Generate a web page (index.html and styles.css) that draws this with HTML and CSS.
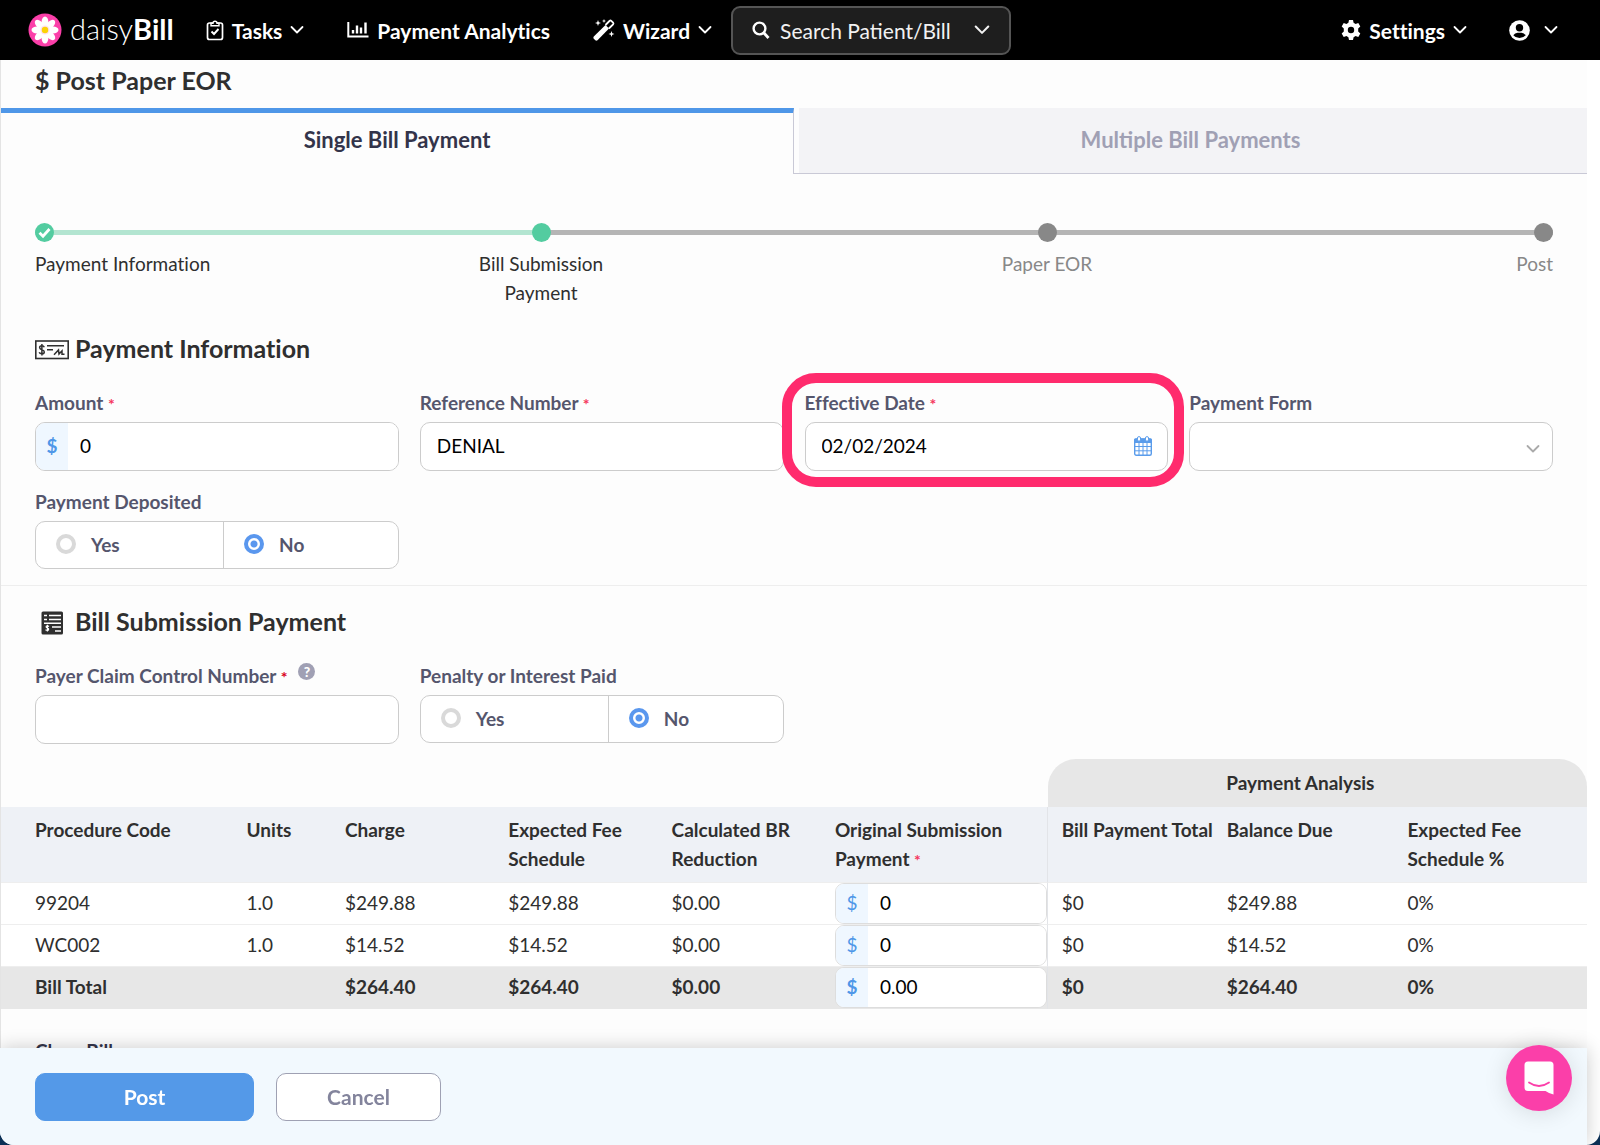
FILE: index.html
```html
<!DOCTYPE html>
<html lang="en">
<head>
    <meta charset="UTF-8">
    <meta name="viewport" content="width=device-width, initial-scale=1.0">
    <link rel="stylesheet" href="styles.css">
    <title>Post Paper EOR - daisyBill</title>
</head>
<body>
    <svg class="sprite" aria-hidden="true">
        <symbol id="chevron" viewBox="0 0 14 14">
            <path d="M1.5 4 L7 9.500 L12.500 4" fill="none" stroke="currentColor" stroke-width="1.8" stroke-linecap="round" stroke-linejoin="round"/>
        </symbol>
    </svg>

    <header class="navbar">
        <a href="#" class="brand">
            <svg width="34" height="34" viewBox="0 0 34 34" aria-hidden="true">
                <circle cx="17" cy="17" r="16.500" fill="#fb3fa9"/>
                <g fill="#fff">
                    <ellipse cx="17" cy="9" rx="3.400" ry="5.500"/>
                    <ellipse cx="17" cy="9" rx="3.400" ry="5.500" transform="rotate(45 17 17)"/>
                    <ellipse cx="17" cy="9" rx="3.400" ry="5.500" transform="rotate(90 17 17)"/>
                    <ellipse cx="17" cy="9" rx="3.400" ry="5.500" transform="rotate(135 17 17)"/>
                    <ellipse cx="17" cy="9" rx="3.400" ry="5.500" transform="rotate(180 17 17)"/>
                    <ellipse cx="17" cy="9" rx="3.400" ry="5.500" transform="rotate(225 17 17)"/>
                    <ellipse cx="17" cy="9" rx="3.400" ry="5.500" transform="rotate(270 17 17)"/>
                    <ellipse cx="17" cy="9" rx="3.400" ry="5.500" transform="rotate(315 17 17)"/>
                    <circle cx="17" cy="17" r="6"/>
                </g>
                <circle cx="17" cy="17" r="4.500" fill="#ffe1ef"/>
                <circle cx="17" cy="17" r="3.200" fill="#fcd307"/>
            </svg>
            <span class="brand-name">daisy<b>Bill</b></span>
        </a>

        <nav class="nav-links">
            <a href="#" class="nav-link">
                <svg width="18" height="22" viewBox="0 0 18 22" fill="none" stroke="#fff" stroke-width="1.700" aria-hidden="true">
                    <rect x="1.500" y="4" width="15" height="16.500" rx="2"/>
                    <path d="M5 6.800 V4.200 H7 A2 2 0 0 1 11 4.200 H13 V6.800 Z" fill="#000" stroke-width="1.400"/>
                    <path d="M5.500 12.500 L8 15 L12.500 10" stroke-width="1.900"/>
                </svg>
                Tasks
                <svg class="chevron" width="14" height="14"><use href="#chevron"/></svg>
            </a>
            <a href="#" class="nav-link">
                <svg width="22" height="18" viewBox="0 0 22 18" fill="none" stroke="#fff" aria-hidden="true">
                    <path d="M1.300 1 V15.500 H21.500" stroke-width="2"/>
                    <path d="M6 12.500 V9 M10 12.500 V4.500 M14 12.500 V6.500 M18.500 12.500 V1.500" stroke-width="2.400"/>
                </svg>
                Payment Analytics
            </a>
            <a href="#" class="nav-link">
                <svg width="22" height="22" viewBox="0 0 22 22" fill="#fff" aria-hidden="true">
                    <path d="M0.800 17.600 L12.500 6 L16 9.500 L4.500 21.300 Q3.300 22.200 2.300 21.300 L0.800 19.800 Q0 18.800 0.800 17.600 Z"/>
                    <path d="M12.500 6 L16.700 1.800 Q17.500 1.200 18.300 1.900 L20.100 3.700 Q20.800 4.500 20.100 5.300 L15.900 9.500" fill="none" stroke="#fff" stroke-width="1.800"/>
                    <path d="M5 1 L5.800 3.200 L8 4 L5.800 4.800 L5 7 L4.200 4.800 L2 4 L4.200 3.200 Z M11 0 L11.600 1.400 L13 2 L11.600 2.600 L11 4 L10.400 2.600 L9 2 L10.400 1.400 Z M18.500 12 L19.300 14.200 L21.500 15 L19.300 15.800 L18.500 18 L17.700 15.800 L15.500 15 L17.700 14.200 Z"/>
                </svg>
                Wizard
                <svg class="chevron" width="14" height="14"><use href="#chevron"/></svg>
            </a>
        </nav>

        <button type="button" class="search">
            <svg width="18" height="18" viewBox="0 0 18 18" fill="none" stroke="#fff" aria-hidden="true">
                <circle cx="7.500" cy="7.500" r="5.900" stroke-width="2.400"/>
                <path d="M12 12 L16.500 17" stroke-width="2.800"/>
            </svg>
            <span class="search-text">Search Patient/Bill</span>
            <svg width="16" height="16"><use href="#chevron"/></svg>
        </button>

        <nav class="nav-account">
            <a href="#" class="nav-link">
                <svg width="20" height="20" viewBox="0 0 20 20" aria-hidden="true">
                    <path fill="#fff" fill-rule="evenodd" d="M8 0 H12 L12.600 2.700 L14.600 3.900 L17.300 3 L19.300 6.500 L17.200 8.400 V11.600 L19.300 13.500 L17.300 17 L14.600 16.100 L12.600 17.300 L12 20 H8 L7.400 17.300 L5.400 16.100 L2.700 17 L0.700 13.500 L2.800 11.600 V8.400 L0.700 6.500 L2.700 3 L5.400 3.900 L7.400 2.700 Z M10 6.800 A3.200 3.200 0 1 0 10 13.200 A3.200 3.200 0 1 0 10 6.800 Z"/>
                </svg>
                Settings
                <svg class="chevron" width="14" height="14"><use href="#chevron"/></svg>
            </a>
            <a href="#" class="nav-link nav-user" aria-label="Account">
                <svg width="21" height="21" viewBox="0 0 21 21" aria-hidden="true">
                    <circle cx="10.500" cy="10.500" r="10.300" fill="#fff"/>
                    <circle cx="10.500" cy="7.800" r="3.700" fill="#000"/>
                    <path d="M4.300 15.300 Q6 12.700 8.500 12.700 H12.500 Q15 12.700 16.700 15.300 Q14.500 18 10.500 18 Q6.500 18 4.300 15.300 Z" fill="#000"/>
                </svg>
                <svg class="chevron" width="14" height="14"><use href="#chevron"/></svg>
            </a>
        </nav>
    </header>

    <main class="content">
        <h1 class="page-title">$ Post Paper EOR</h1>

        <div class="tabs" role="tablist">
            <button type="button" class="tab tab-active" role="tab" aria-selected="true">Single Bill Payment</button>
            <button type="button" class="tab" role="tab" aria-selected="false">Multiple Bill Payments</button>
        </div>

        <ol class="stepper">
            <li class="step step-done">
                <span class="dot">
                    <svg width="19" height="19" viewBox="0 0 19 19" aria-hidden="true"><path d="M4.500 9.800 L8 13.200 L14.500 6" fill="none" stroke="#fff" stroke-width="2.800"/></svg>
                </span>
                <span class="step-label">Payment Information</span>
            </li>
            <li class="step step-current">
                <span class="dot"></span>
                <span class="step-label">Bill Submission Payment</span>
            </li>
            <li class="step">
                <span class="dot"></span>
                <span class="step-label">Paper EOR</span>
            </li>
            <li class="step">
                <span class="dot"></span>
                <span class="step-label">Post</span>
            </li>
        </ol>

        <section class="panel">
            <h2 class="panel-title">
                <svg class="title-icon" width="34" height="20" viewBox="0 0 34 20" fill="none" stroke="#2f2f2f" stroke-width="1.600" aria-hidden="true">
                    <rect x="0.800" y="1" width="32.400" height="17.500"/>
                    <path d="M9.300 7.300 Q8.700 5.800 6.800 5.800 Q4.600 5.800 4.600 7.600 Q4.600 9.200 6.900 9.700 Q9.300 10.300 9.300 12 Q9.300 13.800 6.900 13.800 Q4.700 13.800 4.200 12.200 M6.900 4 V15.500" stroke-width="1.500"/>
                    <path d="M12 5.800 H29 M12 9.800 H18 M19 14.800 L23.500 10 L24 14 L27 10.800 V14.300 H29.500" stroke-width="1.500"/>
                </svg>
                Payment Information
            </h2>
            <div class="fields">
                <div class="field">
                    <label for="amount">Amount <i class="req">*</i></label>
                    <div class="money">
                        <span class="prefix">$</span>
                        <input type="text" id="amount" value="0">
                    </div>
                </div>
                <div class="field">
                    <label for="reference">Reference Number <i class="req">*</i></label>
                    <input type="text" class="box" id="reference" value="DENIAL">
                </div>
                <div class="field field-marked">
                    <label for="effectiveDate">Effective Date <i class="req">*</i></label>
                    <div class="with-icon">
                        <input type="text" class="box" id="effectiveDate" value="02/02/2024">
                        <svg class="field-icon" width="18" height="20" viewBox="0 0 18 20" aria-hidden="true">
                            <rect x="0.700" y="3" width="16.600" height="16.300" rx="1.500" fill="#fff" stroke="#5a9ceb" stroke-width="1.400"/>
                            <path d="M0.700 3 H17.300 V6.500 H0.700 Z" fill="#5a9ceb" stroke="#5a9ceb"/>
                            <path d="M1 10.500 H17 M1 14.800 H17 M5 7 V19 M9 7 V19 M13 7 V19" stroke="#5a9ceb" stroke-width="1"/>
                            <rect x="3.500" y="0.600" width="3" height="4.600" rx="1.400" fill="#fff" stroke="#5a9ceb"/>
                            <rect x="11.500" y="0.600" width="3" height="4.600" rx="1.400" fill="#fff" stroke="#5a9ceb"/>
                        </svg>
                    </div>
                </div>
                <div class="field">
                    <label for="paymentForm">Payment Form</label>
                    <div class="with-icon">
                        <select class="box" id="paymentForm">
                            <option value=""></option>
                            <option value="check">Check</option>
                            <option value="eft">EFT</option>
                        </select>
                        <svg class="field-icon select-arrow" width="14" height="14"><use href="#chevron"/></svg>
                    </div>
                </div>
                <fieldset class="field">
                    <legend>Payment Deposited</legend>
                    <div class="radios">
                        <label><input type="radio" name="deposited"> Yes</label>
                        <label><input type="radio" name="deposited" checked> No</label>
                    </div>
                </fieldset>
            </div>
        </section>

        <section class="panel panel-bill">
            <h2 class="panel-title">
                <svg class="title-icon" width="34" height="24" viewBox="0 0 34 24" aria-hidden="true">
                    <rect x="6.500" y="0.500" width="21.500" height="23" rx="1.500" fill="#2f2f2f"/>
                    <path d="M9 4.500 H12 M14 4.500 H26 M9 8.500 H12 M14 8.500 H26 M9 12.200 H26 M17 16 H26 M20 20 H26" stroke="#fff" stroke-width="1.500"/>
                    <path d="M14 15.500 Q12.500 14.300 11.300 15.200 Q10.600 16.400 12.400 17 Q14.200 17.700 13.400 19 Q12.200 20 10.500 18.800 M12.400 13.700 V20.500" fill="none" stroke="#fff" stroke-width="1.200"/>
                </svg>
                Bill Submission Payment
            </h2>
            <div class="fields">
                <div class="field">
                    <div class="label-row">
                        <label for="claimNumber">Payer Claim Control Number <i class="req req-dark">*</i></label>
                        <button type="button" class="help" aria-label="Help">?</button>
                    </div>
                    <input type="text" class="box" id="claimNumber">
                </div>
                <fieldset class="field">
                    <legend>Penalty or Interest Paid</legend>
                    <div class="radios">
                        <label><input type="radio" name="penalty"> Yes</label>
                        <label><input type="radio" name="penalty" checked> No</label>
                    </div>
                </fieldset>
            </div>
        </section>

        <table class="bill-table">
            <colgroup>
                <col class="col-code">
                <col class="col-units">
                <col class="col-money">
                <col class="col-money">
                <col class="col-money">
                <col class="col-input">
                <col class="col-total">
                <col class="col-balance">
                <col>
            </colgroup>
            <thead>
                <tr class="group-row">
                    <td colspan="6"></td>
                    <th colspan="3" class="group">Payment Analysis</th>
                </tr>
                <tr class="head-row">
                    <th>Procedure Code</th>
                    <th>Units</th>
                    <th>Charge</th>
                    <th>Expected Fee Schedule</th>
                    <th>Calculated BR Reduction</th>
                    <th class="split">Original Submission Payment <i class="req">*</i></th>
                    <th>Bill Payment Total</th>
                    <th>Balance Due</th>
                    <th>Expected Fee Schedule %</th>
                </tr>
            </thead>
            <tbody>
                <tr>
                    <td>99204</td>
                    <td>1.0</td>
                    <td>$249.88</td>
                    <td>$249.88</td>
                    <td>$0.00</td>
                    <td class="split">
                        <div class="money"><span class="prefix">$</span><input type="text" value="0" aria-label="Payment for 99204"></div>
                    </td>
                    <td>$0</td>
                    <td>$249.88</td>
                    <td>0%</td>
                </tr>
                <tr>
                    <td>WC002</td>
                    <td>1.0</td>
                    <td>$14.52</td>
                    <td>$14.52</td>
                    <td>$0.00</td>
                    <td class="split">
                        <div class="money"><span class="prefix">$</span><input type="text" value="0" aria-label="Payment for WC002"></div>
                    </td>
                    <td>$0</td>
                    <td>$14.52</td>
                    <td>0%</td>
                </tr>
            </tbody>
            <tfoot>
                <tr>
                    <td>Bill Total</td>
                    <td></td>
                    <td>$264.40</td>
                    <td>$264.40</td>
                    <td>$0.00</td>
                    <td class="split">
                        <div class="money"><span class="prefix">$</span><input type="text" value="0.00" aria-label="Bill total payment"></div>
                    </td>
                    <td>$0</td>
                    <td>$264.40</td>
                    <td>0%</td>
                </tr>
            </tfoot>
        </table>

        <div class="close-bill">Close Bill</div>
    </main>

    <footer class="actions">
        <button type="submit" class="btn btn-post">Post</button>
        <button type="button" class="btn btn-cancel">Cancel</button>
    </footer>

    <button type="button" class="chat" aria-label="Open chat">
        <svg width="30" height="34" viewBox="0 0 30 34" aria-hidden="true">
            <path d="M4 0.500 H26 Q29.500 0.500 29.500 4 V33.500 Q25 32.500 21.500 30 H4 Q0.500 30 0.500 26.500 V4 Q0.500 0.500 4 0.500 Z" fill="#fff"/>
            <path d="M5 21.500 Q15 28.500 25 21.500" fill="none" stroke="#fb3fa9" stroke-width="1.800" stroke-linecap="round"/>
        </svg>
    </button>
</body>
</html>
```

FILE: styles.css
```css
* {
    box-sizing: border-box;
}

html {
    background-color: #0b2f55;
}

body {
    margin: 0;
    height: 100vh;
    display: flex;
    flex-direction: column;
    overflow: hidden;
    border-radius: 0 0 14px 14px;
    background-color: #fff;
    color: #2f2f2f;
    font-family: Lato, "Open Sans", sans-serif;
    font-size: 19px;
    font-variant-ligatures: none;
    line-height: 29px;
}

button, input, select {
    font-family: inherit;
    font-size: inherit;
    color: inherit;
}

button {
    cursor: pointer;
}

.sprite {
    display: none;
}

/* Top bar */
.navbar {
    flex: none;
    display: flex;
    align-items: center;
    height: 60px;
    padding: 0 42px 0 28px;
    background-color: #000;
    color: #fff;
}

.navbar svg {
    flex: none;
}

.brand {
    display: flex;
    align-items: center;
    gap: 8px;
    color: #fff;
    text-decoration: none;
}

.brand-name {
    padding-bottom: 3px;
    font-size: 29px;
    font-weight: 300;
}

.brand-name b {
    font-weight: bold;
}

.nav-links {
    display: flex;
    gap: 43px;
    margin: 0 19px 0 32px;
}

.nav-link {
    display: flex;
    align-items: center;
    gap: 8px;
    color: #fff;
    font-size: 21px;
    font-weight: bold;
    text-decoration: none;
    white-space: nowrap;
}

.search {
    display: flex;
    align-items: center;
    width: 280px;
    height: 49px;
    padding: 0 19px;
    border: 2px solid #555;
    border-radius: 9px;
    background-color: #1e1e1e;
    color: #f2f2f2;
    font-size: 21px;
}

.search-text {
    flex: 1;
    margin-left: 10px;
    text-align: left;
}

.nav-account {
    display: flex;
    gap: 42px;
    margin-left: auto;
}

.nav-user {
    gap: 14px;
}

/* Scrolling page area */
.content {
    flex: 1;
    min-height: 0;
    margin-right: 13px;
    overflow-y: auto;
    scrollbar-width: none;
    border-left: 1px solid #e4e4e4;
    background-color: #fdfdfd;
}

.page-title {
    margin: 0;
    padding: 6px 34px 13px;
    font-size: 25px;
    font-weight: bold;
    line-height: 29px;
}

.tabs {
    display: flex;
}

.tab {
    width: 50%;
    height: 66px;
    padding: 0 0 2px;
    border: solid #c9c9d6;
    border-width: 0 0 1px;
    background-color: #f3f3f6;
    box-shadow: inset 5px 0 #fdfdfd;
    color: #a0a0b4;
    font-size: 22px;
    font-weight: bold;
}

.tab-active {
    padding-bottom: 8px;
    border-width: 5px 1px 0 0;
    border-top-color: #4f97e8;
    background-color: transparent;
    box-shadow: none;
    color: #33344a;
}

/* Stepper */
.stepper {
    display: flex;
    justify-content: space-between;
    margin: 0;
    padding: 49px 34px 0;
    list-style: none;
    color: #888;
}

.step {
    position: relative;
    flex: 2;
    display: flex;
    flex-direction: column;
    align-items: center;
    text-align: center;
}

.step:first-child {
    flex: 1;
    align-items: flex-start;
}

.step:last-child {
    flex: 1;
    align-items: flex-end;
}

.step::before {
    content: "";
    width: 100%;
    height: 5px;
    margin: 7px 0 -12px;
    background-color: #b5b5b5;
}

.step-done::before {
    background-color: #b3e5d1;
}

.step-current::before {
    background: linear-gradient(to right, #b3e5d1 50%, #b5b5b5 50%);
}

.dot {
    display: flex;
    position: relative;
    width: 19px;
    height: 19px;
    border-radius: 50%;
    background-color: #888;
}

.step-done .dot, .step-current .dot {
    background-color: #53cca0;
}

.step-label {
    max-width: 180px;
    margin-top: 7px;
}

.step-current .step-label {
    max-width: 140px;
}

.step-done, .step-current {
    color: #2f2f2f;
}

/* Form sections */
.panel {
    padding: 26px 34px 16px;
    border-bottom: 1px solid #eee;
}

.panel-bill {
    padding: 20px 34px 15px;
    border-bottom: 0;
}

.panel-title {
    display: flex;
    align-items: center;
    gap: 6px;
    margin: 0 0 25px;
    font-size: 25px;
    font-weight: bold;
    line-height: 30px;
}

.title-icon {
    margin-top: 3px;
}

.fields {
    display: grid;
    grid-template-columns: repeat(4, 1fr);
    gap: 16px 21px;
}

.field {
    min-width: 0;
    margin: 0;
    padding: 0;
    border: 0;
    color: #55566d;
    font-weight: bold;
}

.field > label, .field legend, .label-row {
    display: block;
    padding: 0;
    margin-bottom: 5px;
}

.label-row {
    display: flex;
    gap: 11px;
}

.req {
    color: #f5365c;
    font-size: 16px;
    font-style: normal;
    line-height: 16px;
}

.req-dark {
    color: #d9001b;
}

.help {
    width: 17px;
    height: 17px;
    margin-top: 2px;
    padding: 0;
    border: 0;
    border-radius: 50%;
    background-color: #a0a0b4;
    color: #fff;
    font-size: 14px;
    font-weight: 900;
    line-height: 17px;
}

.box, .money {
    display: block;
    width: 100%;
    height: 49px;
    border: 1px solid #ccc;
    border-radius: 10px;
    background-color: #fff;
    color: #000;
}

.box {
    padding: 0 16px 2px;
    appearance: none;
}

.money {
    display: flex;
    overflow: hidden;
}

.money input {
    flex: 1;
    min-width: 0;
    padding: 0 12px 2px;
    border: 0;
    background-color: #fff;
    color: #000;
}

.prefix {
    display: flex;
    align-items: center;
    justify-content: center;
    width: 32px;
    padding-bottom: 2px;
    background-color: #eff7ff;
    color: #4f97e8;
}

.with-icon {
    position: relative;
}

.field-icon {
    position: absolute;
    top: 14px;
    right: 16px;
}

.select-arrow {
    top: 20px;
    right: 13px;
    color: #aaa;
}

/* Marker drawn around the date field */
.field-marked {
    position: relative;
}

.field-marked::after {
    content: "";
    position: absolute;
    inset: -15px -16px -16px -23px;
    border: 10px solid #ff2b6d;
    border-radius: 34px;
    pointer-events: none;
}

.radios {
    display: flex;
    height: 48px;
    border: 1px solid #ccc;
    border-radius: 10px;
    background-color: #fff;
}

.radios label {
    flex: 1;
    display: flex;
    align-items: center;
    gap: 15px;
    padding: 0 0 2px 20px;
}

.radios label:first-child {
    flex: none;
    width: 52%;
    border-right: 1px solid #ccc;
}

.radios input {
    appearance: none;
    width: 20px;
    height: 20px;
    margin: 0;
    border: 4px solid #d9d9d9;
    border-radius: 50%;
    background-color: #fff;
}

.radios input:checked {
    border-color: #5a97ee;
    background: radial-gradient(circle, #5a97ee 3px, #fff 4px);
}

/* Bill table */
.bill-table {
    width: 100%;
    table-layout: fixed;
    border-collapse: separate;
    border-spacing: 0;
}

.col-code {
    width: 14.6%;
}

.col-units {
    width: 6.2%;
}

.col-money {
    width: 10.3%;
}

.col-input {
    width: 14.3%;
}

.col-total {
    width: 10.4%;
}

.col-balance {
    width: 11.4%;
}

.bill-table th, .bill-table td {
    height: 42px;
    padding: 0 0 2px 14px;
    border-bottom: 1px solid #eee;
    text-align: left;
}

.bill-table th:first-child, .bill-table td:first-child {
    padding-left: 34px;
}

.bill-table .group-row td, .bill-table .group-row th {
    height: 48px;
    border-bottom: 0;
}

.bill-table .group {
    padding: 0 34px 2px 0;
    border-radius: 28px 28px 0 0;
    background-color: #e7e7e7;
    text-align: center;
}

.bill-table .head-row th {
    height: 76px;
    padding-top: 8px;
    padding-right: 10px;
    background-color: #eef1f6;
    vertical-align: top;
}

.bill-table .head-row th:nth-child(7) {
    padding-right: 0;
    white-space: nowrap;
}

.bill-table .split {
    padding-right: 0;
    padding-bottom: 0;
    border-right: 1px solid #e2e4e8;
}

.bill-table tbody td {
    background-color: #fff;
}

.bill-table tfoot td {
    border-bottom-color: #e7e7e7;
    background-color: #e7e7e7;
    font-weight: bold;
}

.bill-table .money {
    height: 41px;
    border-color: #ddd;
    border-radius: 9px;
}

.close-bill {
    padding: 27px 34px 40px;
    color: #33344a;
    font-weight: bold;
}

/* Bottom action bar */
.actions {
    position: relative;
    flex: none;
    display: flex;
    gap: 22px;
    margin-right: 13px;
    padding: 25px 35px 24px;
    background-color: #f2f9fe;
    box-shadow: 0 0 18px rgba(0, 0, 0, 0.2);
}

.btn {
    height: 48px;
    padding-bottom: 3px;
    border: 1px solid #9fa1b3;
    border-radius: 10px;
    font-size: 21px;
    font-weight: bold;
}

.btn-post {
    width: 219px;
    border-color: #5499e8;
    background-color: #5499e8;
    color: #fff;
}

.btn-cancel {
    width: 165px;
    background-color: #fff;
    color: #83849c;
}

.chat {
    position: fixed;
    right: 28px;
    bottom: 34px;
    display: flex;
    align-items: center;
    justify-content: center;
    width: 66px;
    height: 66px;
    padding: 0;
    border: 0;
    border-radius: 50%;
    background-color: #fb3fa9;
    box-shadow: 0 2px 24px rgba(0, 0, 0, 0.12);
}
```
